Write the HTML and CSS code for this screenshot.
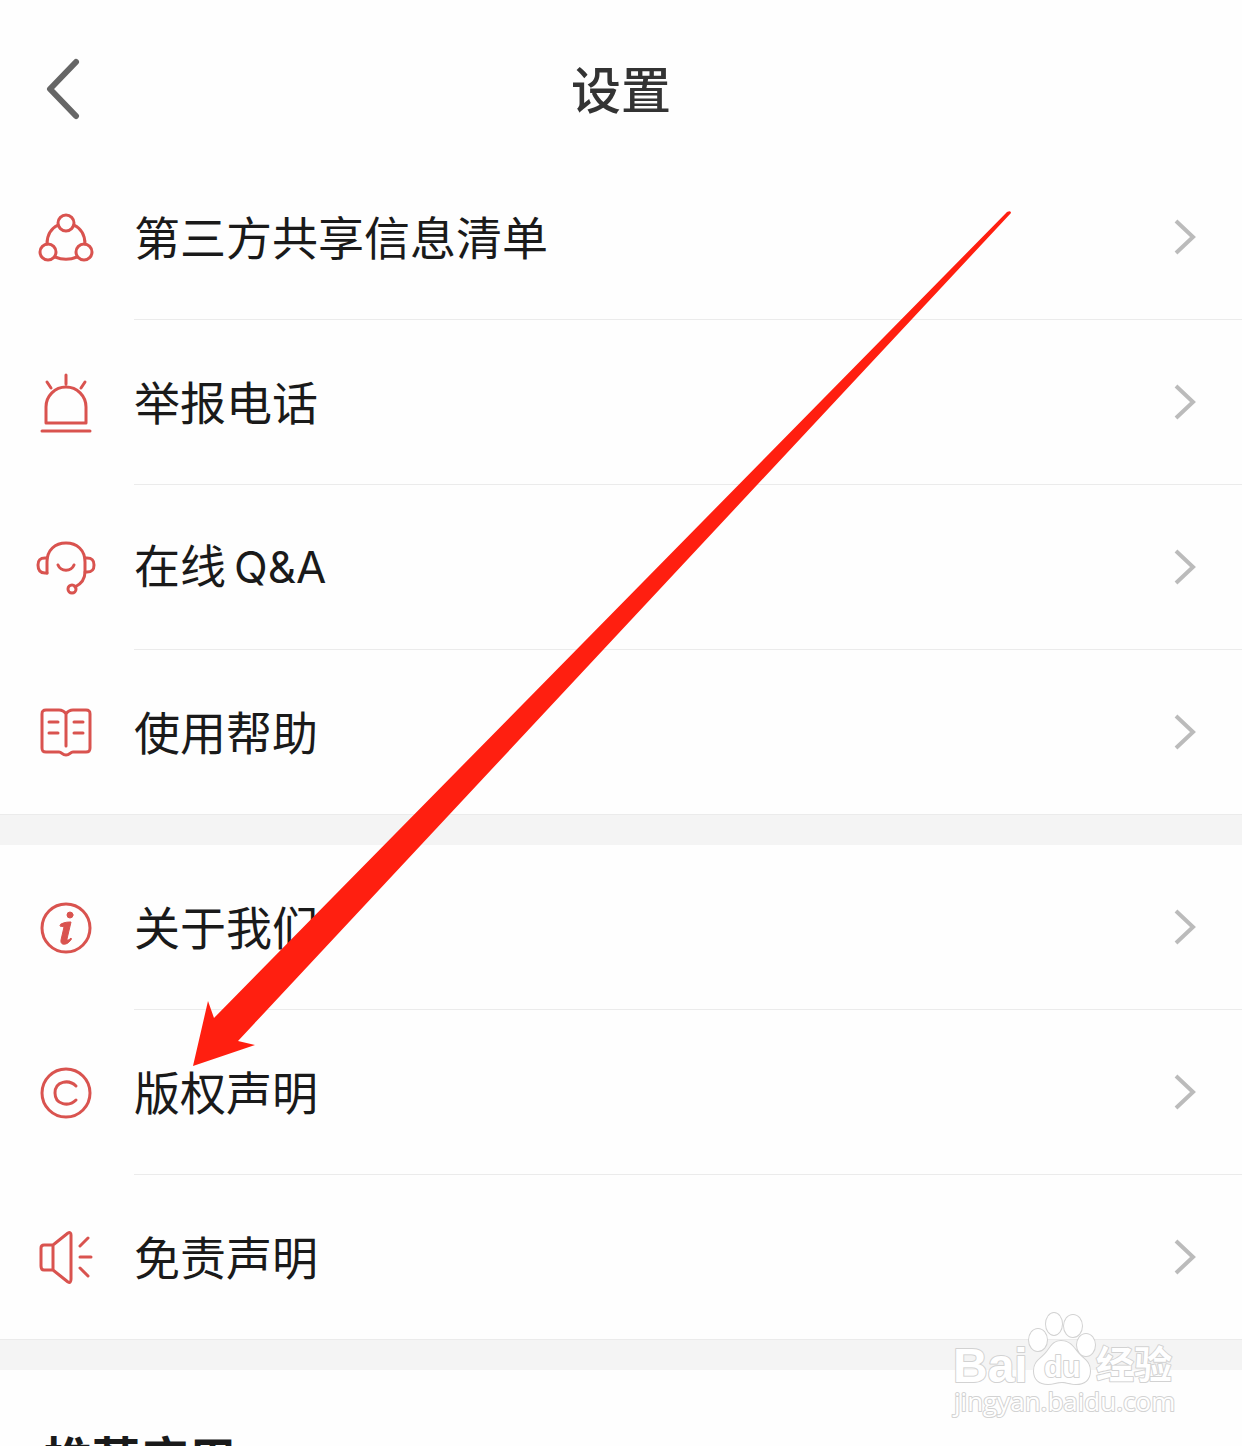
FILE: index.html
```html
<!DOCTYPE html>
<html lang="zh-CN">
  <head>
    <meta charset="UTF-8" />
    <meta name="viewport" content="width=device-width, initial-scale=1.0" />
    <title>设置</title>
    <link rel="stylesheet" href="styles.css">
  </head>
  <body>
    <div class="app">
      <header class="header">
        <button class="back" type="button" aria-label="返回">
          <svg width="36" height="64" viewBox="0 0 36 64"><path d="M32 5 6 32l26 27" /></svg>
        </button>
        <h1 class="title">设置</h1>
      </header>

      <main>
        <nav class="group">
          <a class="row" href="#share">
            <svg class="icon" viewBox="0 0 64 64">
              <circle cx="32" cy="17" r="8" />
              <circle cx="14" cy="46" r="8" />
              <circle cx="50" cy="46" r="8" />
              <path d="M24 19C16 23 13 30 13 38M40 19c8 4 11 11 11 19M21 51c7 3 15 3 22 0" />
            </svg>
            <div class="cell">
              <span class="label">第三方共享信息清单</span>
              <svg class="chevron" viewBox="0 0 24 36"><path d="M3 2 20 18 3 34" /></svg>
            </div>
          </a>
          <a class="row" href="#report">
            <svg class="icon" viewBox="0 0 64 64">
              <path d="M12 52V36a20 20 0 0 1 40 0v16zM8 60h48M32 4v9M13 11l4 6M51 11l-4 6" />
            </svg>
            <div class="cell">
              <span class="label">举报电话</span>
              <svg class="chevron" viewBox="0 0 24 36"><path d="M3 2 20 18 3 34" /></svg>
            </div>
          </a>
          <a class="row" href="#qa">
            <svg class="icon" viewBox="0 0 64 64">
              <path d="M13 37V26C13 14 21 7 32 7s19 7 19 19v10c0 7-4 12-10 15" />
              <path d="M13 22h-2c-5 0-7 2-7 7s2 8 7 8h2M51 22h2c5 0 7 2 7 7s-2 7-7 7h-2M24 29c3 7 13 7 16 0" />
              <circle cx="38" cy="53" r="4" />
            </svg>
            <div class="cell">
              <span class="label">在线<span class="latin">Q&amp;A</span></span>
              <svg class="chevron" viewBox="0 0 24 36"><path d="M3 2 20 18 3 34" /></svg>
            </div>
          </a>
          <a class="row" href="#help">
            <svg class="icon" viewBox="0 0 64 64">
              <path d="M32 46V14c-2-3-4-4-7-4H12c-3 0-4 1-4 4v34c0 3 1 4 4 4h13c3 0 3 3 7 3s4-3 7-3h13c3 0 4-1 4-4V14c0-3-1-4-4-4H39c-3 0-5 1-7 4M15 22h9M15 33h9M40 22h9M40 33h9" />
            </svg>
            <div class="cell">
              <span class="label">使用帮助</span>
              <svg class="chevron" viewBox="0 0 24 36"><path d="M3 2 20 18 3 34" /></svg>
            </div>
          </a>
        </nav>

        <nav class="group">
          <a class="row" href="#about">
            <svg class="icon" viewBox="0 0 64 64">
              <circle cx="32" cy="32" r="24" />
              <circle class="fill" cx="36" cy="19" r="3" />
              <path class="fill" d="M27 28c4-2 7-2 10-2l-4 17c0 2 2 1 4-1 1 1 0 2-1 3-3 4-10 5-9-1l3-13c-1-1-4 0-4-1z" />
            </svg>
            <div class="cell">
              <span class="label">关于我们</span>
              <svg class="chevron" viewBox="0 0 24 36"><path d="M3 2 20 18 3 34" /></svg>
            </div>
          </a>
          <a class="row" href="#copyright">
            <svg class="icon" viewBox="0 0 64 64">
              <circle cx="32" cy="32" r="24" />
              <path d="M42 25c-7-7-21-5-21 7s14 14 21 7" />
            </svg>
            <div class="cell">
              <span class="label">版权声明</span>
              <svg class="chevron" viewBox="0 0 24 36"><path d="M3 2 20 18 3 34" /></svg>
            </div>
          </a>
          <a class="row" href="#disclaimer">
            <svg class="icon" viewBox="0 0 64 64">
              <path d="M19 20h-9c-2 0-3 1-3 3v18c0 3 1 4 3 4h9zL34 8c2-1 3 0 3 2v44c0 3-1 4-3 3L19 45M46 21l8-8M46 32h11M46 43l8 8" />
            </svg>
            <div class="cell">
              <span class="label">免责声明</span>
              <svg class="chevron" viewBox="0 0 24 36"><path d="M3 2 20 18 3 34" /></svg>
            </div>
          </a>
        </nav>

        <section class="recommend">
          <h2>推荐应用</h2>
        </section>
      </main>

      <svg class="arrow" viewBox="0 0 822 858" aria-hidden="true">
        <path d="M3 856 18 791 24 808 817 2Q821 0 821 3L48 831 65 835z" />
      </svg>

      <svg class="watermark" viewBox="0 0 230 118">
        <text class="brand" x="3" y="74">Bai</text>
        <ellipse cx="88" cy="32" rx="9" ry="11" />
        <ellipse cx="104" cy="16" rx="8" ry="11" />
        <ellipse cx="123" cy="18" rx="9" ry="11" />
        <ellipse cx="136" cy="37" rx="9" ry="11" />
        <path d="M111 33c9 0 12 6 17 12s12 8 12 18c0 9-6 13-14 13-6 0-9-2-14-2s-9 2-14 2c-9 0-14-5-14-13 0-10 7-12 12-18s7-12 15-12z" />
        <text class="du" x="94" y="69">du</text>
        <text class="cjk" x="146" y="70">经验</text>
        <text class="site" x="4" y="103">jingyan.baidu.com</text>
      </svg>
    </div>
  </body>
</html>
```

FILE: styles.css
```css
* {
  box-sizing: border-box;
}
body {
  margin: 0;
  background: #fefefe;
  color: #1a1a1a;
  font-family: "Noto Sans CJK SC", sans-serif;
}
.app {
  position: relative;
  height: 100vh;
  overflow: hidden;
}
.header {
  display: grid;
  grid-template-columns: 1fr auto 1fr;
  align-items: center;
  height: 155px;
  padding: 40px 44px 18px;
}
.back {
  justify-self: start;
  padding: 0;
  border: 0;
  background: none;
  cursor: pointer;
}
.back svg {
  display: block;
  fill: none;
  stroke: #666;
  stroke-width: 6;
  stroke-linecap: round;
  stroke-linejoin: round;
}
.title {
  margin: 0;
  padding-bottom: 4px;
  color: #333;
  font-size: 50px;
  line-height: 64px;
  font-weight: 500;
}
.group {
  border-bottom: 30px solid #f4f4f4;
}
.row {
  display: flex;
  align-items: stretch;
  gap: 36px;
  padding-left: 34px;
  height: 165px;
  color: inherit;
  text-decoration: none;
}
.row:last-child {
  border-bottom: 1px solid #ebebeb;
}
.row:last-child .cell {
  border-bottom: 0;
}
.icon {
  align-self: center;
  flex: none;
  width: 64px;
  height: 64px;
  fill: none;
  stroke: #d9534f;
  stroke-width: 3;
  stroke-linecap: round;
  stroke-linejoin: round;
}
.icon .fill {
  fill: #d9534f;
  stroke-width: 1;
}
.cell {
  display: flex;
  flex: 1;
  align-items: center;
  justify-content: space-between;
  padding-right: 45px;
  border-bottom: 1px solid #ebebeb;
}
.label {
  padding-bottom: 4px;
  font-size: 46px;
  line-height: 64px;
}
.latin {
  margin-left: 8px;
  font-family: Inter, sans-serif;
  font-size: 44px;
}
.chevron {
  width: 24px;
  height: 36px;
  fill: none;
  stroke: #bbb;
  stroke-width: 4;
}
.recommend {
  padding: 54px 44px;
}
.recommend h2 {
  margin: 0;
  font-size: 48px;
  line-height: 64px;
  font-weight: 700;
}
/* pointer drawn over the list */
.arrow {
  position: absolute;
  top: 210px;
  left: 190px;
  width: 822px;
  height: 858px;
  fill: #ff1f10;
}
.watermark {
  position: absolute;
  right: 62px;
  bottom: 20px;
  width: 230px;
  height: 118px;
  fill: #fff;
  stroke: #d2d2d2;
  stroke-width: 2;
  stroke-linejoin: round;
  paint-order: stroke;
}
.brand {
  font: bold 48px "Liberation Sans", sans-serif;
}
.du {
  font: bold 30px "Liberation Sans", sans-serif;
}
.cjk {
  font: bold 38px "Noto Sans CJK SC", sans-serif;
}
.site {
  font: 26px "Open Sans", sans-serif;
}
```
